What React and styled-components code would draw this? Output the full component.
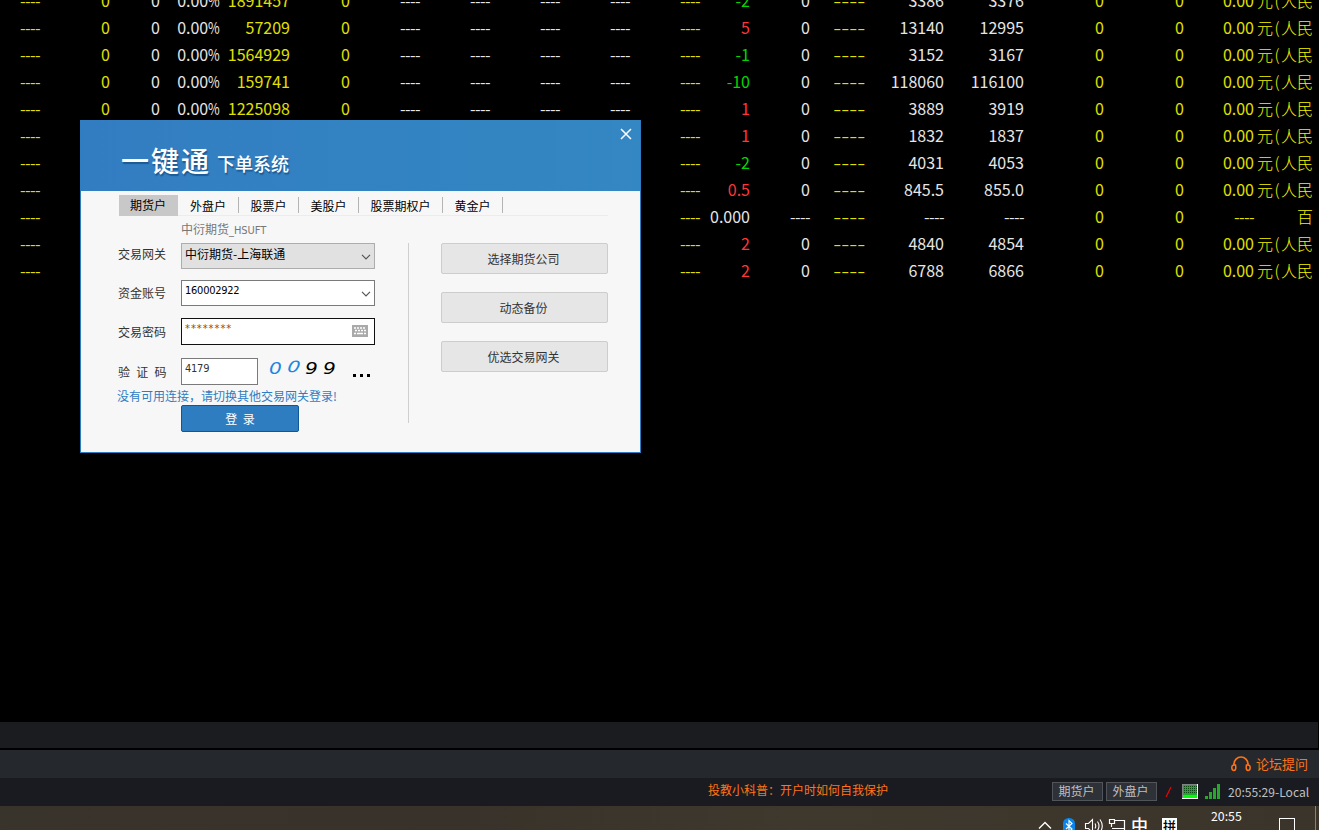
import React from 'react';
import styled, {createGlobalStyle} from 'styled-components';

const GlobalStyle = createGlobalStyle`
    * {
        box-sizing: border-box;
    }

    body {
        margin: 0;
        background: #000;
        font-family: "Noto Sans CJK SC", sans-serif;
        overflow: hidden;
    }
`;

const YELLOW = '#e0e000';
const WHITE = '#e6e6e6';
const RED = '#ff3636';
const GREEN = '#00d800';

const Screen = styled.div`
    position: relative;
    width: 1319px;
    height: 830px;
    display: flex;
    flex-direction: column;
    overflow: hidden;
    background: #000;
`;

/* quote table */

const Quotes = styled.div`
    height: 722px;
    flex: none;
    overflow: hidden;
`;

const QuoteRows = styled.div`
    margin-top: -13px;
`;

const QuoteRow = styled.div`
    display: grid;
    grid-template-columns: 40px 70px 50px 60px 70px 60px 70px 70px 70px 70px 70px 50px 60px 55px 79px 80px 80px 80px 70px 59px;
    height: 27px;
    line-height: 27px;
    font-size: 16px;
`;

const Cell = styled.div`
    color: ${props => props.$color};
    text-align: right;
    white-space: nowrap;
    letter-spacing: ${props => props.$spacing || '0'};
`;

const Unit = styled(Cell)`
    color: #f4f400;
    font-weight: 300;
`;

const Paren = styled.span`
    display: inline-block;
    width: 8px;
    text-align: center;
`;

const Percent = styled.span`
    display: inline-block;
    margin-left: -3px;
    transform: scaleX(0.79);
    transform-origin: right;
`;

const WideDashes = styled.span`
    display: inline-block;
    transform: scaleX(1.44);
    transform-origin: right;
`;

const COLORS = [YELLOW, YELLOW, WHITE, WHITE, YELLOW, YELLOW, WHITE, WHITE, WHITE, WHITE, YELLOW, null, WHITE, YELLOW, WHITE, WHITE, YELLOW, YELLOW, YELLOW];
const D = '----';
const HIDDEN = ['', '', '', '', '', '', '', '', ''];
const left = volume => ['0', '0', <>0.00<Percent>%</Percent></>, volume, '0', D, D, D, D];

const QUOTES = [
    {left: left('1891457'), change: '-2', a: '3386', b: '3376'},
    {left: left('57209'), change: '5', a: '13140', b: '12995'},
    {left: left('1564929'), change: '-1', a: '3152', b: '3167'},
    {left: left('159741'), change: '-10', a: '118060', b: '116100'},
    {left: left('1225098'), change: '1', a: '3889', b: '3919'},
    {left: HIDDEN, change: '1', a: '1832', b: '1837'},
    {left: HIDDEN, change: '-2', a: '4031', b: '4053'},
    {left: HIDDEN, change: '0.5', a: '845.5', b: '855.0'},
    {left: HIDDEN, change: '0.000', hand: D, a: D, b: D, fee: D, unit: '百'},
    {left: HIDDEN, change: '2', a: '4840', b: '4854'},
    {left: HIDDEN, change: '2', a: '6788', b: '6866'},
];

const changeColor = text => {
    if (text === '0.000') return WHITE;
    return text[0] === '-' ? GREEN : RED;
};

const Quote = ({quote}) => {
    const cells = [D, ...quote.left, D, quote.change, quote.hand || '0', <WideDashes>{D}</WideDashes>, quote.a, quote.b, '0', '0', quote.fee || '0.00'];
    return (
        <QuoteRow>
            {cells.map((text, i) => (
                <Cell key={i} $color={COLORS[i] || changeColor(text)} $spacing={text === D ? '-0.55px' : '0'}>{text}</Cell>
            ))}
            <Unit>{quote.unit || <>元<Paren>(</Paren>人民</>}</Unit>
        </QuoteRow>
    );
};

/* login window */

const LoginWindow = styled.div`
    position: absolute;
    left: 80px;
    top: 120px;
    width: 561px;
    height: 333px;
    display: flex;
    flex-direction: column;
    border: 1px solid #2f7dc1;
    border-top: none;
    background: #f7f7f7;
    font-size: 12px;
    color: #333;
`;

const Header = styled.div`
    height: 71px;
    flex: none;
    display: flex;
    justify-content: space-between;
    padding: 0 8px 0 40px;
    background: linear-gradient(90deg, #327dc1, #3387c2);
    color: #fff;
`;

const Brand = styled.div`
    display: flex;
    align-items: flex-start;
    padding-top: 19px;
    line-height: 42px;
    font-size: 28px;
    font-weight: 500;
    letter-spacing: 2px;
    text-shadow: 1px 2px 1px #1c5a94;
`;

const BrandSub = styled.span`
    margin: 3px 0 0 6px;
    font-size: 18px;
    letter-spacing: 0;
`;

const CloseIcon = styled.svg`
    width: 12px;
    height: 12px;
    margin-top: 8px;
`;

const Tabs = styled.div`
    height: 25px;
    flex: none;
    display: flex;
    margin: 0 32px 0 38px;
    padding-top: 4px;
    border-bottom: 1px solid #ececec;
    color: #000;
`;

const Tab = styled.div`
    width: ${props => props.$width || 60}px;
    height: 21px;
    padding-right: 1px;
    line-height: ${props => props.$active ? 20 : 21}px;
    text-align: center;
    background: ${props => props.$active ? '#c8c8c8' : 'linear-gradient(#b4b4b4, #b4b4b4) right 2px / 1px 16px no-repeat'};
    background-position: right 2px;
`;

const Body = styled.div`
    flex: 1;
    display: flex;
    padding-left: 36px;
`;

const Form = styled.div`
    width: 291px;
`;

const Hint = styled.div`
    height: 27px;
    padding-left: 64px;
    line-height: 26px;
    color: #777;
`;

const FormRow = styled.div`
    display: flex;
    height: ${props => props.$height}px;
`;

const Label = styled.div`
    width: 62px;
    flex: none;
    padding-left: 1px;
    line-height: ${props => props.$line || 22}px;
    word-spacing: 3.5px;
    margin-right: 2px;
`;

const Field = styled.div`
    width: ${props => props.$width || 194}px;
    height: ${props => props.$height || 26}px;
    flex: none;
    display: flex;
    justify-content: space-between;
    padding: 0 3px;
    border: 1px solid ${props => props.$border || '#7a7a7a'};
    background: ${props => props.$fill || '#fff'};
    line-height: 20px;
    color: ${props => props.$color || '#000'};
`;

const Latin = styled.span`
    font-family: "DejaVu Sans Condensed", "DejaVu Sans", sans-serif;
    font-stretch: condensed;
    font-size: 11px;
    letter-spacing: ${props => props.$spacing || '-0.25px'};
`;

const Chevron = styled.svg`
    width: 10px;
    height: 6px;
    margin: 10px 0 0;
`;

const Keyboard = styled.svg`
    width: 16px;
    height: 12px;
    margin: 6px 3px 0 0;
`;

const Captcha = styled.div`
    display: flex;
    width: 84px;
    padding-left: 11px;
    font-family: "DejaVu Sans", sans-serif;
    font-size: 15.5px;
    font-style: italic;
    line-height: 22px;
`;

const CaptchaDigit = styled.span`
    width: 18px;
    flex: none;
    color: ${props => props.$color};
    transform: ${props => props.$tilt || ''} scaleX(1.3);
    transform-origin: left;
`;

const More = styled.div`
    padding: 16px 0 0 11px;
    display: flex;
    gap: 4px;
`;

const Dot = styled.i`
    width: 3px;
    height: 3px;
    background: #000;
`;

const Message = styled.div`
    height: 19px;
    line-height: 20px;
    white-space: nowrap;
    color: #2f7dc1;
`;

const LoginButton = styled.div`
    width: 118px;
    height: 27px;
    margin-left: 64px;
    border: 1px solid #0f5796;
    border-radius: 2px;
    background: #2f7dc1;
    color: #fff;
    line-height: 26px;
    text-align: center;
    word-spacing: 3px;
`;

const Side = styled.div`
    height: 180px;
    margin-top: 27px;
    padding-left: 32px;
    border-left: 1px solid #cfcfcf;
    display: flex;
    flex-direction: column;
    gap: 18px;
`;

const SideButton = styled.div`
    width: 167px;
    height: 31px;
    padding-right: 2px;
    border: 1px solid #cdcdcd;
    border-radius: 2px;
    background: #e6e6e6;
    line-height: 29px;
    text-align: center;
`;

const DropArrow = () => (
    <Chevron viewBox="0 0 10 6">
        <path d="M1 0.8 L5 4.8 L9 0.8" fill="none" stroke="#555" strokeWidth="1.2"/>
    </Chevron>
);

const Login = () => (
    <LoginWindow>
        <Header>
            <Brand>一键通<BrandSub>下单系统</BrandSub></Brand>
            <CloseIcon viewBox="0 0 12 12">
                <path d="M1 1 L11 11 M11 1 L1 11" stroke="#fff" strokeWidth="1.5"/>
            </CloseIcon>
        </Header>
        <Tabs>
            <Tab $active $width={59}>期货户</Tab>
            <Tab $width={61}>外盘户</Tab>
            <Tab>股票户</Tab>
            <Tab>美股户</Tab>
            <Tab $width={84}>股票期权户</Tab>
            <Tab>黄金户</Tab>
        </Tabs>
        <Body>
            <Form>
                <Hint>中衍期货<Latin $spacing="-0.05px">_HSUFT</Latin></Hint>
                <FormRow $height={37}>
                    <Label>交易网关</Label>
                    <Field $fill="#e1e1e1" $border="#adadad">中衍期货-上海联通<DropArrow/></Field>
                </FormRow>
                <FormRow $height={38}>
                    <Label $line={26}>资金账号</Label>
                    <Field><Latin>160002922</Latin><DropArrow/></Field>
                </FormRow>
                <FormRow $height={40}>
                    <Label $line={28}>交易密码</Label>
                    <Field $height={27} $border="#111" $color="#8a4a1c">
                        <Latin $spacing="0.95px">********</Latin>
                        <Keyboard viewBox="0 0 16 12">
                            <rect width="16" height="12" fill="#aaa"/>
                            <path d="M2 3h12M3 5.5h11" stroke="#fff" strokeWidth="1.5" strokeDasharray="2 1"/>
                            <path d="M2 8.5h2M5 8.5h6M12 8.5h2" stroke="#fff" strokeWidth="1.5"/>
                        </Keyboard>
                    </Field>
                </FormRow>
                <FormRow $height={28}>
                    <Label $line={28}>验 证 码</Label>
                    <Field $width={77} $height={27} $color="#333"><Latin>4179</Latin></Field>
                    <Captcha>
                        <CaptchaDigit $color="#1c86e0">0</CaptchaDigit>
                        <CaptchaDigit $color="#1c86e0" $tilt="translateY(-2px) skewX(-8deg)">0</CaptchaDigit>
                        <CaptchaDigit $color="#000">9</CaptchaDigit>
                        <CaptchaDigit $color="#000">9</CaptchaDigit>
                    </Captcha>
                    <More><Dot/><Dot/><Dot/></More>
                </FormRow>
                <Message>没有可用连接，请切换其他交易网关登录!</Message>
                <LoginButton>登 录</LoginButton>
            </Form>
            <Side>
                <SideButton>选择期货公司</SideButton>
                <SideButton>动态备份</SideButton>
                <SideButton>优选交易网关</SideButton>
            </Side>
        </Body>
    </LoginWindow>
);

/* bottom bars */

const EmptyBar = styled.div`
    height: 26px;
    flex: none;
    margin: 0 1px 2px 0;
    background: #1b1c20;
`;

const ForumBar = styled.div`
    height: 28px;
    flex: none;
    display: flex;
    justify-content: flex-end;
    gap: 5px;
    padding-right: 11px;
    background: #25282d;
    color: #ff7316;
    font-size: 13px;
    line-height: 27px;
`;

const Headphones = styled.svg`
    width: 20px;
    height: 16px;
    margin-top: 6px;
`;

const StatusBar = styled.div`
    height: 28px;
    flex: none;
    display: flex;
    padding-left: 708px;
    background: #1a1b20;
    font-size: 12px;
    line-height: 24px;
`;

const Ticker = styled.div`
    width: 344px;
    color: #ff7316;
`;

const AccountButton = styled.div`
    width: 51px;
    height: 19px;
    margin: 4px 3px 0 0;
    padding-right: 2px;
    border: 1px solid #515459;
    background: #2e3138;
    color: #c0c0c0;
    line-height: 16px;
    text-align: center;
`;

const StatusIcons = styled.svg`
    width: 60px;
    height: 16px;
    margin: 6px 0 0 3px;
`;

const LocalTime = styled.div`
    margin-left: 5px;
    color: #c0c0c0;
    font-size: 12.1px;
    line-height: 28px;
    white-space: nowrap;
`;

const Taskbar = styled.div`
    height: 24px;
    flex: none;
    display: flex;
    overflow: hidden;
    padding-left: 1038px;
    background: linear-gradient(90deg, #38332b 0%, #39322a 35%, #3f382d 60%, #3a342a 100%);
    color: #fff;
`;

const TrayIcons = styled.svg`
    width: 88px;
    height: 24px;
    flex: none;
`;

const ImeMode = styled.div`
    width: 36px;
    padding-left: 5px;
    font-size: 17px;
    font-weight: 500;
    line-height: 38px;
`;

const ImeBox = styled.div`
    width: 15px;
    height: 15px;
    margin-top: 12px;
    background: #fff;
    color: #000;
    font-size: 13px;
    font-weight: 500;
    line-height: 16px;
    text-align: center;
`;

const Clock = styled.div`
    width: 102px;
    padding-left: 34px;
    font-size: 12.3px;
    line-height: 20px;
`;

const Notice = styled.div`
    width: 16px;
    height: 16px;
    margin-top: 12px;
    border: 1px solid #fff;
`;

const DesktopEdge = styled.div`
    width: 1px;
    height: 24px;
    margin-left: 20px;
    background: #85817a;
`;

const Bottom = () => (
    <>
        <EmptyBar/>
        <ForumBar>
            <Headphones viewBox="0 0 20 16">
                <path d="M3 9 V8 A7 7 0 0 1 17 8 V9" fill="none" stroke="#ff7316" strokeWidth="1.7"/>
                <path d="M4.500 9 Q0.800 8.500 0.800 11.500 Q0.800 14.500 3 14.500 Q5 14.300 4.800 11 Z" fill="none" stroke="#ff7316" strokeWidth="1.5"/>
                <path d="M15.500 9 Q19.200 8.500 19.200 11.500 Q19.200 14.500 17 14.500 Q15 14.300 15.200 11 Z" fill="none" stroke="#ff7316" strokeWidth="1.5"/>
            </Headphones>
            论坛提问
        </ForumBar>
        <StatusBar>
            <Ticker>投教小科普：开户时如何自我保护</Ticker>
            <AccountButton>期货户</AccountButton>
            <AccountButton>外盘户</AccountButton>
            <StatusIcons viewBox="0 0 60 16">
                <path d="M3 13 L8 3" stroke="#f00" strokeWidth="1.1"/>
                <rect x="19" y="0" width="16" height="15" fill="#fff"/>
                <rect x="19" y="0" width="15" height="14" fill="#7d8580"/>
                <rect x="20" y="1" width="14" height="10" fill="#22a832"/>
                <path d="M21 2.5h13M21 4.5h13M21 6.5h13M21 8.5h13" stroke="#07490f" strokeDasharray="1 1"/>
                <rect x="20" y="11" width="14" height="3" fill="#0f0"/>
                <path d="M42 12h3v3h-3zM46 8h3v7h-3zM50 4h3v11h-3zM54 0h3v15h-3z" fill="#27a82c"/>
            </StatusIcons>
            <LocalTime>20:55:29-Local</LocalTime>
        </StatusBar>
        <Taskbar>
            <TrayIcons viewBox="0 0 88 24">
                <path d="M1 22.5 L7 16.5 L13 22.5" fill="none" stroke="#fff" strokeWidth="1.4"/>
                <rect x="25" y="12" width="12" height="17" rx="5.5" fill="#0a84e8"/>
                <path d="M28 17.5 L34 23 L31 26 V14.5 L34 17.5 L28 23" fill="none" stroke="#fff" strokeWidth="1.1"/>
                <path d="M47.500 17.500h3l4-4v13l-4-4h-3z" fill="none" stroke="#fff" strokeWidth="1.1"/>
                <path d="M57 17.5q1.500 2.500 0 5M59.500 15.500q3 4.500 0 9M62 13.500q4.500 6.500 0 13" fill="none" stroke="#fff" strokeWidth="1.1"/>
                <path d="M77 14.500h9.500v9.500M71.500 13.500h5v4h-5zM73.500 18v3M74 22.500h12.500" fill="none" stroke="#fff" strokeWidth="1.2"/>
            </TrayIcons>
            <ImeMode>中</ImeMode>
            <ImeBox>拼</ImeBox>
            <Clock>20:55</Clock>
            <Notice/>
            <DesktopEdge/>
        </Taskbar>
    </>
);

const App = () => (
    <>
        <GlobalStyle/>
        <Screen>
            <Quotes>
                <QuoteRows>
                    {QUOTES.map((quote, i) => <Quote key={i} quote={quote}/>)}
                </QuoteRows>
            </Quotes>
            <Bottom/>
            <Login/>
        </Screen>
    </>
);

export default App;
